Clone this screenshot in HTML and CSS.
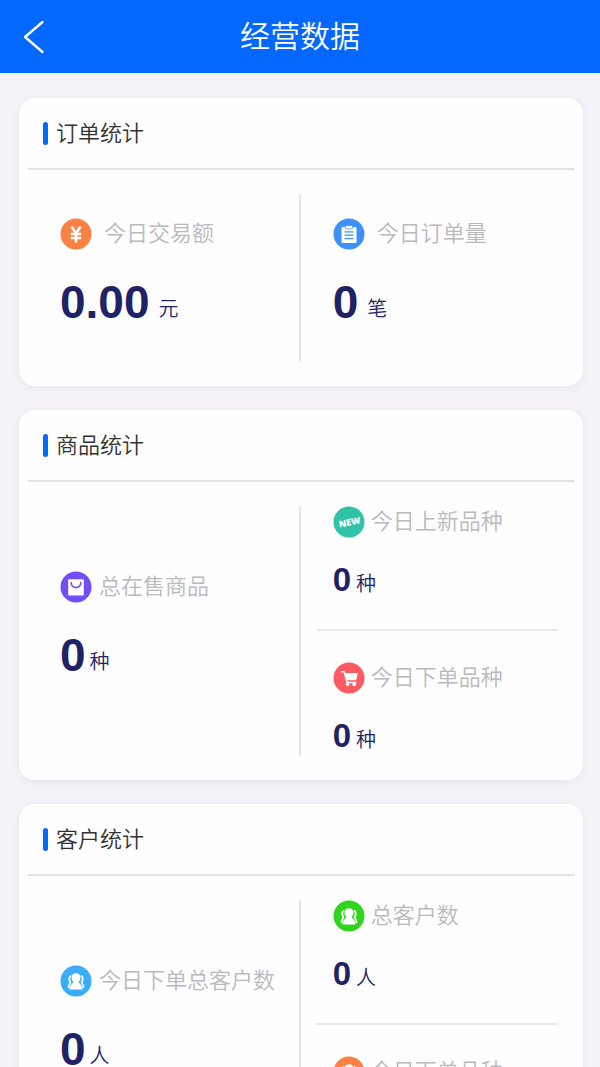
FILE: index.html
```html
<!DOCTYPE html>
<html lang="zh-CN">
<head>
    <meta charset="UTF-8">
    <meta name="viewport" content="width=device-width, initial-scale=1.0">
    <title>经营数据</title>
    <link rel="stylesheet" href="styles.css">
</head>
<body>
    <header class="topbar">
        <button class="back-btn" type="button" aria-label="返回">
            <svg width="22" height="34" viewBox="0 0 22 34" fill="none" stroke="#fff" stroke-width="2.4" stroke-linecap="round" stroke-linejoin="round"><path d="M19.500 2 2 17 19.500 32"/></svg>
        </button>
        <h1>经营数据</h1>
    </header>

    <main class="page">
        <section class="card">
            <h2 class="card-title"><span>订单统计</span></h2>
            <div class="card-body orders">
                <div class="column">
                    <div class="stat">
                        <div class="stat-label">
                            <svg class="icon" viewBox="0 0 32 32"><circle cx="16" cy="16" r="15.500" fill="#fb8043"/><path d="M11.500 8.500 16 15.500l4.500-7M16 15v9.500M10.800 16h10.400M10.800 20h10.400" fill="none" stroke="#fff" stroke-width="2.600"/></svg>
                            <span>今日交易额</span>
                        </div>
                        <p class="stat-value"><strong>0.00</strong><span>元</span></p>
                    </div>
                </div>
                <div class="column">
                    <div class="stat">
                        <div class="stat-label">
                            <svg class="icon" viewBox="0 0 32 32"><circle cx="16" cy="16" r="15.500" fill="#3d90f8"/><rect x="8.500" y="9" width="15" height="16" rx="1" fill="#fff"/><rect x="12.500" y="7.500" width="7" height="3.500" rx="1" fill="#fff" stroke="#3d90f8" stroke-width=".8"/><path d="M11.500 13.800h9M11.500 17.200h9M11.500 20.600h9" stroke="#3d90f8" stroke-width="1.300"/></svg>
                            <span>今日订单量</span>
                        </div>
                        <p class="stat-value"><strong>0</strong><span>笔</span></p>
                    </div>
                </div>
            </div>
        </section>

        <section class="card">
            <h2 class="card-title"><span>商品统计</span></h2>
            <div class="card-body">
                <div class="column">
                    <div class="stat">
                        <div class="stat-label">
                            <svg class="icon" viewBox="0 0 32 32"><circle cx="16" cy="16" r="15.500" fill="#734df5"/><rect x="8.200" y="8.200" width="15.600" height="16.400" rx="1" fill="#fff"/><path d="M11.200 11.500c0 6.800 9.600 6.800 9.600 0" fill="none" stroke="#734df5" stroke-width="1.600" stroke-linecap="round"/></svg>
                            <span>总在售商品</span>
                        </div>
                        <p class="stat-value"><strong>0</strong><span>种</span></p>
                    </div>
                </div>
                <div class="column split">
                    <div class="stat small">
                        <div class="stat-label">
                            <svg class="icon" viewBox="0 0 32 32"><circle cx="16" cy="16" r="15.500" fill="#30c3a9"/><text class="new-text" x="16.500" y="19.500" text-anchor="middle" transform="rotate(-11 16 16)">NEW</text></svg>
                            <span>今日上新品种</span>
                        </div>
                        <p class="stat-value"><strong>0</strong><span>种</span></p>
                    </div>
                    <div class="stat small">
                        <div class="stat-label">
                            <svg class="icon" viewBox="0 0 32 32"><circle cx="16" cy="16" r="15.500" fill="#fb5b60"/><path d="M8.500 9.800h2.700l2.800 10.600h9" fill="none" stroke="#fff" stroke-width="1.500" stroke-linecap="round" stroke-linejoin="round"/><path d="M11.500 11H25l-2 7.200H13.400z" fill="#fff"/><circle cx="14.600" cy="22.500" r="1.800" fill="#fff"/><circle cx="21.200" cy="22.500" r="1.800" fill="#fff"/></svg>
                            <span>今日下单品种</span>
                        </div>
                        <p class="stat-value"><strong>0</strong><span>种</span></p>
                    </div>
                </div>
            </div>
        </section>

        <section class="card">
            <h2 class="card-title"><span>客户统计</span></h2>
            <div class="card-body">
                <div class="column">
                    <div class="stat">
                        <div class="stat-label">
                            <svg class="icon" viewBox="0 0 32 32"><circle cx="16" cy="16" r="15.500" fill="#3aacf9"/><use href="#people"/></svg>
                            <span>今日下单总客户数</span>
                        </div>
                        <p class="stat-value"><strong>0</strong><span>人</span></p>
                    </div>
                </div>
                <div class="column split">
                    <div class="stat small">
                        <div class="stat-label">
                            <svg class="icon" viewBox="0 0 32 32">
                                <circle cx="16" cy="16" r="15.500" fill="#32d51d"/>
                                <g id="people" fill="none" stroke="#fff">
                                    <path d="M16 8.200c2.900 0 4.500 1.900 4.500 4.400 0 1.800-.8 3.400-1.900 4.400 0 1.200 3.700 2.400 3.900 7.600h-13c.2-5.200 3.900-6.400 3.900-7.600-1.100-1-1.900-2.600-1.900-4.400 0-2.500 1.600-4.400 4.500-4.400z" fill="#fff" stroke="none"/>
                                    <path d="M10.500 11c-1.600 1.200-1.700 3.800-.2 5.600.3 1.700-1.500 2.300-1.700 5.600M21.500 11c1.600 1.200 1.700 3.800.2 5.600-.3 1.700 1.500 2.300 1.700 5.600" stroke-width="1.800" stroke-linecap="round"/>
                                </g>
                            </svg>
                            <span>总客户数</span>
                        </div>
                        <p class="stat-value"><strong>0</strong><span>人</span></p>
                    </div>
                    <div class="stat small">
                        <div class="stat-label">
                            <svg class="icon" viewBox="0 0 32 32"><circle cx="16" cy="16" r="15.500" fill="#fb8043"/><use href="#people"/></svg>
                            <span>今日下单品种</span>
                        </div>
                        <p class="stat-value"><strong>0</strong><span>种</span></p>
                    </div>
                </div>
            </div>
        </section>
    </main>
</body>
</html>
```
FILE: styles.css
```css
* {
    box-sizing: border-box;
}
body {
    margin: 0;
    font-family: "Noto Sans CJK SC", sans-serif;
    font-weight: 350;
    background-color: #f4f2f6;
    color: #333;
}
h1, h2, p {
    margin: 0;
    font-weight: 350;
}
.topbar {
    display: grid;
    grid-template-columns: 68px 1fr 68px;
    align-items: center;
    height: 73px;
    background-color: #0468ff;
    color: white;
}
.topbar h1 {
    padding-bottom: 6px;
    font-size: 30px;
    line-height: 40px;
    text-align: center;
}
.back-btn {
    display: flex;
    align-items: center;
    justify-content: center;
    height: 73px;
    padding: 0;
    border: none;
    background: none;
    cursor: pointer;
}
.page {
    display: flex;
    flex-direction: column;
    gap: 24px;
    padding: 25px 17px 24px 19px;
}
.card {
    padding: 0 8px 0 9px;
    background-color: #fefefe;
    border-radius: 16px;
    box-shadow: 0 2px 8px rgba(0,0,0,0.05);
}
.card-title {
    display: flex;
    align-items: center;
    gap: 8px;
    height: 72px;
    padding: 0 15px;
    border-bottom: 2px solid #e4e3e7;
    font-size: 22px;
    line-height: 32px;
}
.card-title::before {
    content: "";
    width: 5px;
    height: 23px;
    border-radius: 3px;
    background-color: #0468ff;
}
.card-title span {
    padding-bottom: 4px;
}
.stat-label span {
    padding-bottom: 6px;
}
.card-body {
    display: grid;
    grid-template-columns: 99fr 101fr;
    min-height: 298px;
    padding: 24px 0;
}
.card-body.orders {
    min-height: 216px;
}
.column {
    display: flex;
    flex-direction: column;
    justify-content: center;
    padding-left: 32px;
}
.column + .column {
    border-left: 2px solid #e6e5e9;
}
.stat {
    padding-bottom: 8px;
}
.stat-label {
    display: flex;
    align-items: center;
    gap: 7px;
    height: 32px;
    color: #b9b9be;
    font-size: 22px;
    line-height: 32px;
    white-space: nowrap;
}
.orders .stat-label {
    gap: 12px;
}
.icon {
    flex: none;
    width: 32px;
    height: 32px;
}
.new-text {
    fill: #fff;
    font-family: "Open Sans", sans-serif;
    font-size: 9px;
    font-weight: 800;
}
.stat-value {
    display: flex;
    align-items: flex-end;
    gap: 4px;
    margin-top: 24px;
    color: #1e2365;
    font-size: 20px;
    line-height: 20px;
}
.stat-value strong {
    font-family: "Liberation Sans", Arial, sans-serif;
    font-size: 46px;
    font-weight: 700;
    line-height: 56px;
}
.stat-value span {
    padding-bottom: 12px;
}
.orders .stat-value {
    gap: 9px;
}
.column.split {
    justify-content: flex-start;
    padding: 0 17px 0 16px;
}
.stat.small {
    height: 123px;
    padding: 0 0 0 16px;
}
.stat.small + .stat.small {
    padding-top: 31px;
    border-top: 2px solid #e9e8ec;
}
.small .stat-label {
    gap: 6px;
}
.small .stat-value {
    gap: 5px;
    margin-top: 22px;
}
.small .stat-value strong {
    font-size: 33px;
    line-height: 40px;
}
.small .stat-value span {
    padding-bottom: 7px;
}
```
